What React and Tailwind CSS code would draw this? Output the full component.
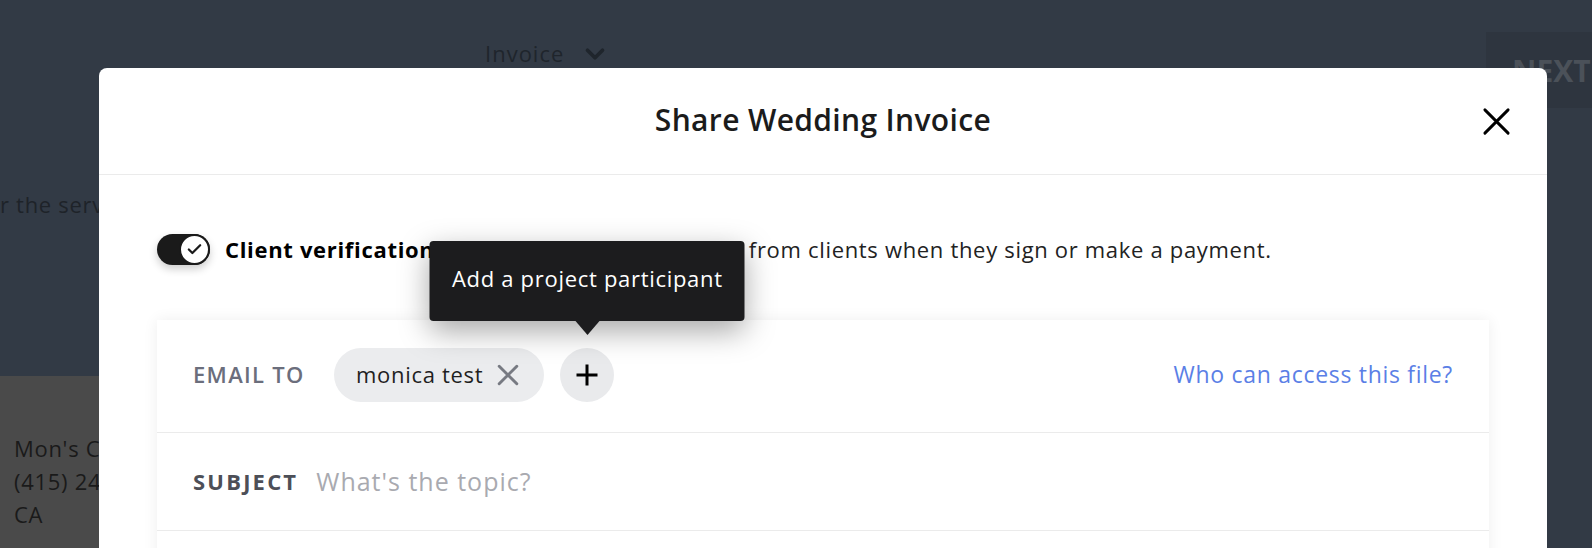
import { Check, ChevronDown } from 'lucide-react';

function Cross({ size, stroke, className }) {
  return (
    <svg width={size} height={size} viewBox="0 0 30 30" fill="none" stroke="currentColor" strokeWidth={stroke} strokeLinecap="round" className={className}>
      <path d="M3 3L27 27M27 3L3 27" />
    </svg>
  );
}

function PlusIcon() {
  return (
    <svg width="24" height="24" viewBox="0 0 24 24" fill="none" stroke="currentColor" strokeWidth="3" className="text-black">
      <path d="M12 1.5V22.5M1.5 12H22.5" />
    </svg>
  );
}

export default function App() {
  return (
    <div className="relative w-[1592px] h-[548px] overflow-hidden font-['Open_Sans',sans-serif]">
      {/* page behind the overlay */}
      <div className="flex flex-col h-full">
        <div className="h-[376px] bg-[#323a45] flex flex-col">
          <div className="flex items-start pt-[32px]">
            <div className="flex items-center gap-[16px] ml-[485px] mt-[5px] text-[22px] tracking-[1px] text-[#1f252c]">
              Invoice
              <ChevronDown size={30} strokeWidth={3} />
            </div>
            <div className="ml-auto w-[106px] h-[76px] bg-[#2e353f] flex items-center pl-[26px] text-[30px] font-bold text-[#4b5159]">
              NEXT
            </div>
          </div>
          <p className="mt-[80px] text-[22px] tracking-[0.7px] text-[#1e2329] whitespace-nowrap">r the services rendered</p>
        </div>
        <div className="flex flex-1">
          <div className="flex-1 bg-[#4a4a4a] pt-[56px] pl-[14px] text-[22px] tracking-[0.7px] leading-[33px] text-[#1a1a1a]">
            <p>Mon's Company</p>
            <p>(415) 240-1234</p>
            <p>CA</p>
          </div>
          <div className="w-[46px] bg-[#323a45]" />
        </div>
      </div>

      {/* modal */}
      <div className="absolute left-[99px] top-[68px] w-[1448px] h-[520px] bg-white rounded-lg">
        <div className="relative h-[107px] flex items-center justify-center border-b border-[#ebebeb]">
          <h1 className="text-[30px] font-semibold tracking-[0.35px] text-[#1b1b1b] -mt-[3px]">Share Wedding Invoice</h1>
          <button className="absolute right-[36px] top-[39px] text-black">
            <Cross size={29} stroke={3} />
          </button>
        </div>

        <div className="px-[58px]">
          <div className="flex items-center mt-[59px] h-[31px]">
            <div className="w-[53px] h-[31px] rounded-full bg-[#1a1a1a] flex items-center justify-end shadow-[0_4px_8px_rgba(0,0,0,0.2)]">
              <div className="w-[31px] h-[31px] rounded-full bg-white border-2 border-[#1a1a1a] flex items-center justify-center">
                <Check size={17} strokeWidth={3.2} className="text-[#1a1a1a]" />
              </div>
            </div>
            <p className="ml-[15px] -mt-[1px] text-[22px] tracking-[0.68px] text-[#222] whitespace-nowrap">
              <span className="font-bold text-black">Client verification: </span>
              Request a verification code from clients when they sign or make a payment.
            </p>
          </div>

          <div className="mt-[55px] bg-white shadow-[0_0_14px_rgba(0,0,0,0.07)]">
            <div className="h-[113px] flex items-center pl-[36px] pr-[36px] border-b border-[#ebebeb]">
              <span className="text-[22px] font-semibold tracking-[1.3px] text-[#6b6e7c] w-[141px] -mt-[3px]">EMAIL TO</span>
              <div className="h-[54px] -mt-[2px] rounded-full bg-[#ebecee] flex items-center pl-[22px] pr-[25px] gap-[14px]">
                <span className="text-[22px] tracking-[0.7px] text-[#1f1f1f] -mt-[2px]">monica test</span>
                <Cross size={22} stroke={4} className="text-[#777a82]" />
              </div>
              <div className="relative ml-[16px] -mt-[2px]">
                <div className="w-[54px] h-[54px] rounded-full bg-[#e9eaec] flex items-center justify-center">
                  <PlusIcon />
                </div>
                <div className="absolute bottom-[81px] left-1/2 -translate-x-1/2 w-[315px] h-[80px] rounded-[4px] bg-[#1c1c1e] flex items-center justify-center pb-[5px] shadow-[0_10px_30px_rgba(0,0,0,0.35)]">
                  <span className="text-[22px] tracking-[0.7px] text-white whitespace-nowrap">Add a project participant</span>
                  <div className="absolute top-full left-1/2 -translate-x-1/2 w-0 h-0 border-x-[12px] border-x-transparent border-t-[14px] border-t-[#1c1c1e]" />
                </div>
              </div>
              <a className="ml-auto -mt-[3px] text-[23px] tracking-[0.7px] text-[#5b7fe6]">Who can access this file?</a>
            </div>
            <div className="h-[98px] flex items-center pl-[36px] border-b border-[#ebebeb]">
              <span className="text-[22px] font-bold tracking-[2.2px] text-[#4d4f57]">SUBJECT</span>
              <span className="ml-[18px] text-[25px] tracking-[1px] text-[#a9aab0]">What's the topic?</span>
            </div>
            <div className="h-[60px]" />
          </div>
        </div>
      </div>
    </div>
  );
}
